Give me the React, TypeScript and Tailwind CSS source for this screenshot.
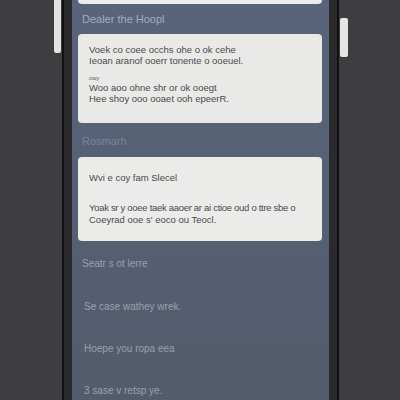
export default function App() {
  return (
    <div className="relative w-[400px] h-[400px] overflow-hidden bg-[#3e3e40] font-['Liberation_Sans',Arial,sans-serif]">
      {/* side buttons */}
      <div className="absolute left-[54px] top-0 w-[7px] h-[53px] bg-[#e2e2e2] rounded-b-[2px]" />
      <div className="absolute left-[340px] top-[18px] w-[8px] h-[39px] bg-[#e6e6e6] rounded-[2px]" />

      <div className="absolute left-[62px] top-0 w-[277px] h-[400px] border-x-2 border-[#111113] bg-[#2a292c] px-[8px]">
        <div className="h-full bg-gradient-to-b from-[#59647c] to-[#535c6c] px-[6px] pr-[7px] flex flex-col">
          <div className="h-[4px] bg-[#ececea] rounded-b-[4px]" />

          <p className="mt-[8px] ml-[4px] h-[14px] leading-[14px] text-[11px] text-[#a3abbd]">Dealer the Hoopl</p>

          <div className="mt-[8px] h-[89px] rounded-[4px] bg-[#e9e9e7] px-[11px] pt-[10px] text-[9.5px] leading-[11px] text-[#4a4a4c]">
            <p>Voek co coee occhs ohe o ok cehe</p>
            <p>Ieoan aranof ooerr tonente o ooeuel.</p>
            <p className="mt-[9px] text-[6px] leading-[6px] text-[#5a5a5c]">cwy</p>
            <p className="mt-[1px]">Woo aoo ohne shr or ok ooegt</p>
            <p>Hee shoy ooo ooaet ooh epeerR.</p>
          </div>

          <p className="mt-[11px] ml-[4px] h-[14px] leading-[14px] text-[11px] text-[#7b849a]">Rosmarh</p>

          <div className="mt-[9px] h-[84px] rounded-[4px] bg-[#ebebe9] px-[11px] pt-[15px] text-[#4a4a4c]">
            <p className="text-[9.5px] leading-[12px]">Wvi e coy fam Slecel</p>
            <p className="mt-[18px] whitespace-nowrap text-[9.5px] leading-[12px] tracking-[-0.3px]">Yoak sr y ooee taek aaoer ar ai ctioe oud o ttre sbe o</p>
            <p className="text-[9.5px] leading-[12px]">Coeyrad ooe s' eoco ou Teocl.</p>
          </div>

          <div className="mt-[16px] ml-[4px] flex flex-col text-[10px] leading-[14px] text-[#9aa0ad]">
            <p className="h-[43px]">Seatr s ot lerre</p>
            <p className="h-[42px] ml-[2px]">Se case wathey wrek.</p>
            <p className="h-[42px] ml-[2px]">Hoepe you ropa eea</p>
            <p className="ml-[2px]">3 sase v retsp ye.</p>
          </div>
        </div>
      </div>
    </div>
  )
}
